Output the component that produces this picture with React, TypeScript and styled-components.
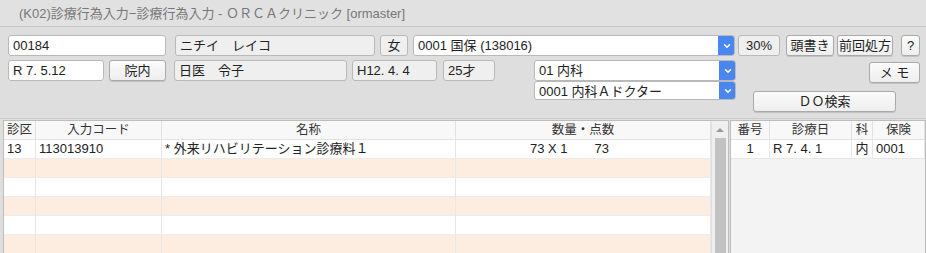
import styled, { createGlobalStyle } from "styled-components";
import { ChevronDown } from "lucide-react";

const GlobalStyle = createGlobalStyle`
  html, body {
    margin: 0;
    padding: 0;
    background: #dedede;
    font-family: "Liberation Sans", "Noto Sans CJK JP", sans-serif;
    font-size: 13px;
    color: #222;
  }
`;

const rows = [
  { ku: "13", code: "113013910", name: "* 外来リハビリテーション診療料１", qty: "73 X 1", pt: "73" },
  null,
  null,
  null,
  null,
  null,
];

export default function App() {
  return (
    <Window>
      <GlobalStyle />
      <TitleBar>(K02)診療行為入力−診療行為入力 - ＯＲＣＡクリニック [ormaster]</TitleBar>
      <Form>
        <Row>
          <Field $w={158}>00184</Field>
          <Field $w={200} $ml={9} $gray>ニチイ　レイコ</Field>
          <Field $w={28} $ml={5} $gray $center>女</Field>
          <Select $w={322} $ml={5}>
            <SelectText>0001 国保 (138016)</SelectText>
            <Arrow>
              <ChevronDown size={10} strokeWidth={3.5} />
            </Arrow>
          </Select>
          <Field $w={42} $ml={3} $gray $center>30%</Field>
          <Button $w={48} $ml={6}>頭書き</Button>
          <Button $w={56} $ml={3}>前回処方</Button>
          <Button $w={19} $ml={8}>?</Button>
        </Row>
        <Row2>
          <Field $w={96}>R 7. 5.12</Field>
          <Button $w={57} $ml={5} $h={21}>院内</Button>
          <Field $w={173} $ml={8} $gray>日医　令子</Field>
          <Field $w={85} $ml={5} $gray>H12. 4. 4</Field>
          <Field $w={52} $ml={6} $gray>25才</Field>
          <SelectStack>
            <Select $w={202}>
              <SelectText>01 内科</SelectText>
              <Arrow>
                <ChevronDown size={10} strokeWidth={3.5} />
              </Arrow>
            </Select>
            <Select $w={202} $h={19}>
              <SelectText>0001 内科Ａドクター</SelectText>
              <Arrow>
                <ChevronDown size={10} strokeWidth={3.5} />
              </Arrow>
            </Select>
          </SelectStack>
          <SideButtons>
            <Button $w={51} $h={21}>メ モ</Button>
            <Button $w={143} $h={21} $self="flex-start">ＤＯ検索</Button>
          </SideButtons>
        </Row2>
      </Form>
      <Panels>
        <LeftTable>
          <Grid>
            <HeadCell>診区</HeadCell>
            <HeadCell>入力コード</HeadCell>
            <HeadCell>名称</HeadCell>
            <HeadCell>数量・点数</HeadCell>
            {rows.map((r, i) => (
              <RowCells key={i} $peach={i % 2 === 1}>
                <Cell>{r?.ku}</Cell>
                <Cell>{r?.code}</Cell>
                <Cell>{r?.name}</Cell>
                <QtyCell>
                  <span>{r?.qty}</span>
                  <span>{r?.pt}</span>
                </QtyCell>
              </RowCells>
            ))}
          </Grid>
          <ScrollBar>
            <ScrollUp />
            <ScrollThumb />
          </ScrollBar>
        </LeftTable>
        <RightTable>
          <SmallGrid>
            <HeadCell>番号</HeadCell>
            <HeadCell>診療日</HeadCell>
            <HeadCell>科</HeadCell>
            <HeadCell>保険</HeadCell>
            <SmallCell $center>1</SmallCell>
            <SmallCell>R 7. 4. 1</SmallCell>
            <SmallCell $center>内</SmallCell>
            <SmallCell>0001</SmallCell>
          </SmallGrid>
        </RightTable>
      </Panels>
    </Window>
  );
}

const Window = styled.div`
  width: 926px;
  height: 253px;
  overflow: hidden;
  background: #dedede;
`;

const TitleBar = styled.div`
  height: 26px;
  line-height: 27px;
  padding-left: 19px;
  font-size: 13px;
  color: #777;
  background: #e1e1e1;
  border-bottom: 1px solid #c6c6c6;
`;

const Form = styled.div`
  padding: 8px 0 0 8px;
  height: 83px;
  border-bottom: 1px solid #cbcbcb;
`;

const Row = styled.div`
  display: flex;
  align-items: flex-start;
  height: 21px;
`;

const Row2 = styled.div`
  display: flex;
  align-items: flex-start;
  margin-top: 4px;
`;

const Field = styled.div<{ $w: number; $ml?: number; $gray?: boolean; $center?: boolean }>`
  box-sizing: border-box;
  width: ${(p) => p.$w}px;
  margin-left: ${(p) => p.$ml ?? 0}px;
  height: 21px;
  padding: 0 4px;
  line-height: 19px;
  white-space: nowrap;
  text-align: ${(p) => (p.$center ? "center" : "left")};
  background: ${(p) => (p.$gray ? "#efefef" : "#ffffff")};
  border: 1px solid #b9b9b9;
  border-radius: 3px;
`;

const Button = styled.div<{ $w: number; $ml?: number; $h?: number; $self?: string }>`
  box-sizing: border-box;
  width: ${(p) => p.$w}px;
  margin-left: ${(p) => p.$ml ?? 0}px;
  height: ${(p) => p.$h ?? 21}px;
  line-height: ${(p) => (p.$h ?? 21) - 2}px;
  align-self: ${(p) => p.$self ?? "auto"};
  text-align: center;
  white-space: nowrap;
  background: linear-gradient(#fbfbfb, #eeeeee);
  border: 1px solid #aaaaaa;
  border-radius: 3px;
  box-shadow: 0 1px 0 rgba(0, 0, 0, 0.12);
  color: #222;
`;

const Select = styled.div<{ $w: number; $ml?: number; $h?: number }>`
  box-sizing: border-box;
  display: flex;
  width: ${(p) => p.$w}px;
  margin-left: ${(p) => p.$ml ?? 0}px;
  height: ${(p) => p.$h ?? 21}px;
  background: #fff;
  border: 1px solid #b9b9b9;
  border-radius: 3px;
  overflow: hidden;
`;

const SelectText = styled.div`
  flex: 1;
  padding: 0 4px;
  line-height: 19px;
  white-space: nowrap;
`;

const Arrow = styled.div`
  width: 17px;
  display: flex;
  align-items: center;
  justify-content: center;
  background: #4a86f0;
  color: #fff;
  margin: -1px -1px -1px 0;
`;

const SelectStack = styled.div`
  display: flex;
  flex-direction: column;
  margin-left: 39px;
`;

const SideButtons = styled.div`
  display: flex;
  flex-direction: column;
  align-items: flex-end;
  gap: 8px;
  margin-left: 17px;
  margin-top: 2px;
  width: 167px;
`;

const Panels = styled.div`
  display: flex;
  padding: 1px 0 0 3px;
  gap: 1px;
`;

const LeftTable = styled.div`
  display: flex;
  width: 724px;
  height: 140px;
  background: #fff;
  border: 1px solid #bdbdbd;
  border-bottom: none;
`;

const Grid = styled.div`
  display: grid;
  grid-template-columns: 32px 126px 294px 255px;
  grid-auto-rows: 19px;
  align-content: start;
  width: 707px;
`;

const HeadCell = styled.div`
  text-align: center;
  line-height: 18px;
  color: #333;
  background: #f8f8f8;
  border-right: 1px solid #e2e2e2;
  border-bottom: 1px solid #e2e2e2;
  font-size: 12.5px;
`;

const RowCells = styled.div<{ $peach: boolean }>`
  display: contents;
  & > div {
    background: ${(p) => (p.$peach ? "#fdede0" : "#ffffff")};
  }
`;

const Cell = styled.div`
  padding-left: 3px;
  line-height: 18px;
  white-space: nowrap;
  border-right: 1px solid #e6e6e6;
  border-bottom: 1px solid #ececec;
`;

const QtyCell = styled(Cell)`
  display: flex;
  padding-left: 74px;
  gap: 27px;
`;

const ScrollBar = styled.div`
  width: 16px;
  background: #efefef;
  display: flex;
  flex-direction: column;
  align-items: center;
  border-left: 1px solid #e0e0e0;
`;

const ScrollUp = styled.div`
  width: 0;
  height: 0;
  margin-top: 7px;
  border-left: 4px solid transparent;
  border-right: 4px solid transparent;
  border-bottom: 4px solid #9a9a9a;
`;

const ScrollThumb = styled.div`
  width: 11px;
  flex: 1;
  margin-top: 6px;
  background: #c2c2c2;
`;

const RightTable = styled.div`
  width: 194px;
  height: 140px;
  background: #f3f3f3;
  border: 1px solid #bdbdbd;
  border-bottom: none;
`;

const SmallGrid = styled.div`
  display: grid;
  grid-template-columns: 39px 82px 21px 52px;
  grid-auto-rows: 19px;
`;

const SmallCell = styled.div<{ $center?: boolean }>`
  background: #fff;
  padding-left: ${(p) => (p.$center ? 0 : 3)}px;
  text-align: ${(p) => (p.$center ? "center" : "left")};
  line-height: 18px;
  border-right: 1px solid #e6e6e6;
  border-bottom: 1px solid #e6e6e6;
`;
